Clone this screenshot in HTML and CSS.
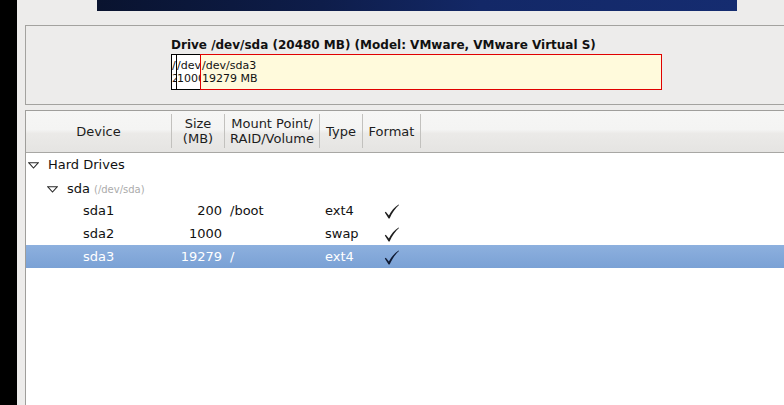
FILE: index.html
```html
<!DOCTYPE html>
<html>
<head>
<meta charset="utf-8">
<link rel="stylesheet" href="styles.css">
</head>
<body>
<div class="screen">
  <div class="strip"></div>
  <div class="main">
    <div class="banner"></div>
    <div class="frame">
      <div class="drive-title">Drive /dev/sda (20480 MB) (Model: VMware, VMware Virtual S)</div>
      <div class="bar">
        <div class="seg seg1"><span>/dev/sda1</span><span>200 MB</span></div>
        <div class="seg seg2"><span>/dev/sda2</span><span>1000 MB</span></div>
        <div class="seg seg3"><span>/dev/sda3</span><span>19279 MB</span></div>
      </div>
    </div>
    <div class="tree">
      <div class="thead">
        <div class="th">Device</div>
        <div class="th">Size<br>(MB)</div>
        <div class="th">Mount Point/<br>RAID/Volume</div>
        <div class="th">Type</div>
        <div class="th">Format</div>
        <div class="th last"></div>
      </div>
      <div class="row">
        <div class="cell dev lvl0"><svg class="tri" width="11" height="7" viewBox="0 0 11 7"><polygon points="0.8,0.8 10.2,0.8 5.5,6" fill="none" stroke="#2a2a2a" stroke-width="1.1"/></svg>Hard Drives</div>
      </div>
      <div class="row">
        <div class="cell dev lvl1"><svg class="tri" width="11" height="7" viewBox="0 0 11 7"><polygon points="0.8,0.8 10.2,0.8 5.5,6" fill="none" stroke="#2a2a2a" stroke-width="1.1"/></svg>sda <span class="hint">(/dev/sda)</span></div>
      </div>
      <div class="row">
        <div class="cell dev lvl2">sda1</div>
        <div class="cell size">200</div>
        <div class="cell mount">/boot</div>
        <div class="cell type">ext4</div>
        <div class="cell fmt"><svg width="15" height="15" viewBox="0 0 15 15"><path d="M0.8 8.6 L1.8 7.8 L4.9 11.6 C7.2 7.2 10.4 3.2 14.6 0.6 L15 1.1 C11.2 4.4 8 9.2 5.6 14.6 L4.6 14.6 Z" fill="#1e1e1e"/></svg></div>
      </div>
      <div class="row">
        <div class="cell dev lvl2">sda2</div>
        <div class="cell size">1000</div>
        <div class="cell mount"></div>
        <div class="cell type">swap</div>
        <div class="cell fmt"><svg width="15" height="15" viewBox="0 0 15 15"><path d="M0.8 8.6 L1.8 7.8 L4.9 11.6 C7.2 7.2 10.4 3.2 14.6 0.6 L15 1.1 C11.2 4.4 8 9.2 5.6 14.6 L4.6 14.6 Z" fill="#1e1e1e"/></svg></div>
      </div>
      <div class="row selected">
        <div class="cell dev lvl2">sda3</div>
        <div class="cell size">19279</div>
        <div class="cell mount">/</div>
        <div class="cell type">ext4</div>
        <div class="cell fmt"><svg width="15" height="15" viewBox="0 0 15 15"><path d="M0.8 8.6 L1.8 7.8 L4.9 11.6 C7.2 7.2 10.4 3.2 14.6 0.6 L15 1.1 C11.2 4.4 8 9.2 5.6 14.6 L4.6 14.6 Z" fill="#0f1a33"/></svg></div>
      </div>
    </div>
  </div>
</div>
</body>
</html>
```

FILE: styles.css
```css
* { box-sizing: border-box; }
html, body {
  margin: 0;
  padding: 0;
  width: 784px;
  height: 405px;
  overflow: hidden;
  background: #edeceb;
  font-family: "DejaVu Sans", "Liberation Sans", sans-serif;
  color: #000;
}
.screen {
  display: flex;
  height: 405px;
}
.strip {
  width: 17px;
  flex: none;
  background: #000;
}
.main {
  flex: 1;
  display: flex;
  flex-direction: column;
  padding-left: 8px;
  min-width: 0;
}
.banner {
  margin-left: 72px;
  width: 640px;
  height: 11px;
  flex: none;
  background: linear-gradient(90deg, #09132f 0%, #0e1d4a 35%, #132867 60%, #152c70 100%);
}
.frame {
  margin-top: 14px;
  margin-right: -20px;
  height: 80px;
  flex: none;
  border: 1px solid #a3a29f;
  padding: 12px 0 0 145px;
}
.drive-title {
  font-weight: bold;
  font-size: 12px;
  line-height: 14px;
  color: #111;
  white-space: nowrap;
}
.bar {
  margin-top: 2px;
  display: flex;
  height: 36px;
}
.seg {
  display: flex;
  flex-direction: column;
  justify-content: center;
  overflow: hidden;
  white-space: nowrap;
  font-size: 11px;
  line-height: 13px;
  color: #111;
  background: #fff;
}
.seg1 {
  width: 6px;
  border: 1px solid #000;
}
.seg2 {
  width: 23px;
  border-top: 1px solid #000;
  border-bottom: 1px solid #000;
}
.seg3 {
  width: 462px;
  border: 1px solid #e00000;
  background: #fffadc;
  padding-left: 1px;
}
.tree {
  margin-top: 5px;
  margin-right: -20px;
  flex: 1;
  border: 1px solid #9f9e9b;
  border-bottom: none;
  background: #fff;
}
.thead, .row {
  display: grid;
  grid-template-columns: 146px 53px 95px 43px 58px 1fr;
}
.thead {
  height: 42px;
  border-bottom: 1px solid #a8a7a4;
  background: linear-gradient(#f6f6f5 0%, #f4f4f3 45%, #ebeae8 55%, #e5e4e2 100%);
}
.th {
  margin: 3px 0 4px;
  border-right: 1px solid #c2c1be;
  display: flex;
  align-items: center;
  justify-content: center;
  text-align: center;
  font-size: 13px;
  line-height: 15px;
  color: #1d1d1d;
}
.th.last { border-right: none; }
.row {
  height: 23px;
  font-size: 13px;
  line-height: 23px;
  color: #111;
}
.cell {
  white-space: nowrap;
  display: flex;
  align-items: center;
}
.dev { grid-column: 1 / 2; }
.lvl0 { padding-left: 2px; }
.lvl1 { padding-left: 21px; }
.lvl2 { padding-left: 57px; }
.tri { flex: none; margin-right: 9px; margin-top: 1px; }
.dev.lvl0, .dev.lvl1 { grid-column: 1 / 4; }
.hint {
  font-size: 10px;
  color: #ababab;
  margin-left: 4px;
  margin-top: 2px;
}
.size { justify-content: flex-end; padding-right: 3px; }
.mount { padding-left: 5px; }
.type { padding-left: 5px; }
.fmt { padding-left: 21px; padding-top: 1px; }
.selected {
  background: linear-gradient(#8db0de, #7aa1d5);
  color: #fff;
}
```
